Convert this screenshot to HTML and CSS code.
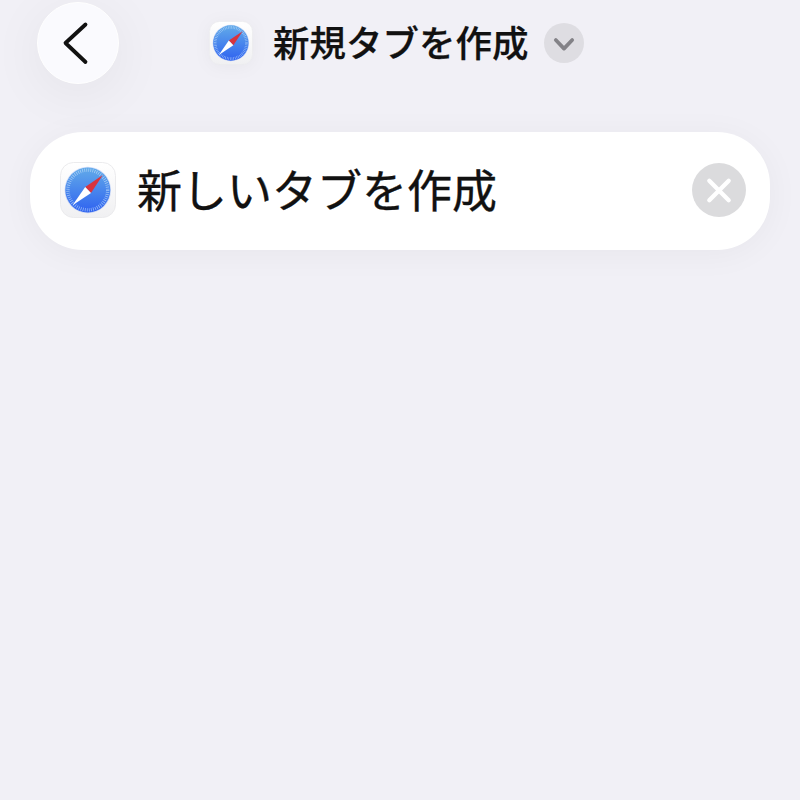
FILE: index.html
```html
<!DOCTYPE html>
<html lang="ja">
<head>
<meta charset="utf-8">
<title>新規タブを作成</title>
<link rel="stylesheet" href="styles.css">
</head>
<body>
<svg class="defs" aria-hidden="true">
  <defs>
    <linearGradient id="tile" x1="0" y1="0" x2="0" y2="1"><stop offset="0" stop-color="#fff"/><stop offset="1" stop-color="#f0f0f2"/></linearGradient>
    <linearGradient id="dial" x1="0" y1="0" x2="0" y2="1"><stop offset="0" stop-color="#62abe9"/><stop offset="1" stop-color="#2f62f0"/></linearGradient>
  </defs>
  <symbol id="safari" viewBox="0 0 56 56">
    <rect x=".5" y=".5" width="55" height="55" rx="13" fill="url(#tile)" stroke="#ebebed"/>
    <circle cx="27.8" cy="28" r="23.2" fill="#3c78f4" opacity=".22"/>
    <circle cx="27.8" cy="28" r="22.5" fill="url(#dial)"/>
    <circle cx="27.8" cy="28" r="19.9" fill="none" stroke="#c5e0fb" stroke-width="3.4" stroke-dasharray=".75 1.334" opacity=".7"/>
    <path d="M42.8 13 25.2 24.9 31 30.9Z" fill="#d8343f"/>
    <path d="M12.5 43.3 25.2 24.9 31 30.9Z" fill="#fff"/>
  </symbol>
</svg>
<header class="header">
  <button class="back" aria-label="戻る"><svg viewBox="0 0 80 80"><path d="M47.5 21.5 27.5 40 47.5 59"/></svg></button>
  <div class="title">
    <svg class="title-icon"><use href="#safari"/></svg>
    <h1>新規タブを作成</h1>
    <button class="expand" aria-label="開く"><svg viewBox="0 0 40 40"><path d="M11.8 17 20 25.6 28.2 17"/></svg></button>
  </div>
</header>
<main class="action">
  <svg class="action-icon"><use href="#safari"/></svg>
  <span class="label">新しいタブを作成</span>
  <button class="clear" aria-label="削除"><svg viewBox="0 0 54 54"><path d="M17.3 17.8 36.7 37.2M36.7 17.8 17.3 37.2"/></svg></button>
</main>
</body>
</html>
```
FILE: styles.css
```css
* { box-sizing: border-box; }
body { margin: 0; height: 100vh; overflow: hidden; background: #f1f0f6; color: #111; font-family: "Noto Sans CJK JP", sans-serif; }
button { border: 0; padding: 0; flex: none; border-radius: 50%; }
button svg { display: block; width: 100%; height: 100%; fill: none; stroke-linecap: round; stroke-linejoin: round; }
.defs { position: absolute; width: 0; height: 0; }
.header { display: flex; padding: 2px 37px 0; height: 132px; }
.back { width: 82px; height: 82px; background: #fafafe; border: 1px solid #fff; box-shadow: 0 10px 55px rgba(0, 0, 0, .06); }
.back path { stroke: #111; stroke-width: 3.8; }
.title { display: flex; align-items: center; height: 82px; margin-left: 90px; }
.title-icon { width: 44px; height: 44px; filter: drop-shadow(0 2px 8px rgba(0, 0, 0, .04)); }
h1 { margin: 0 15px 0 20px; padding-bottom: 2px; font-size: 36.5px; line-height: 54px; font-weight: 500; white-space: nowrap; width: 256px; -webkit-text-stroke: .25px #111; }
.expand { width: 40px; height: 40px; background: #dedde2; }
.expand path { stroke: #838287; stroke-width: 3.7; }
.action { display: flex; align-items: center; height: 118px; margin: 0 30px; padding: 0 24px 2px 30px; border-radius: 53px; background: #fff; box-shadow: 0 4px 34px rgba(0, 0, 0, .045); }
.action-icon { width: 56px; height: 56px; }
.label { margin-left: 21px; padding-bottom: 2px; font-size: 45px; line-height: 64px; white-space: nowrap; -webkit-text-stroke: .35px #111; }
.clear { width: 54px; height: 54px; margin-left: auto; background: #dbdbdd; }
.clear path { stroke: #fff; stroke-width: 4.3; }
```
